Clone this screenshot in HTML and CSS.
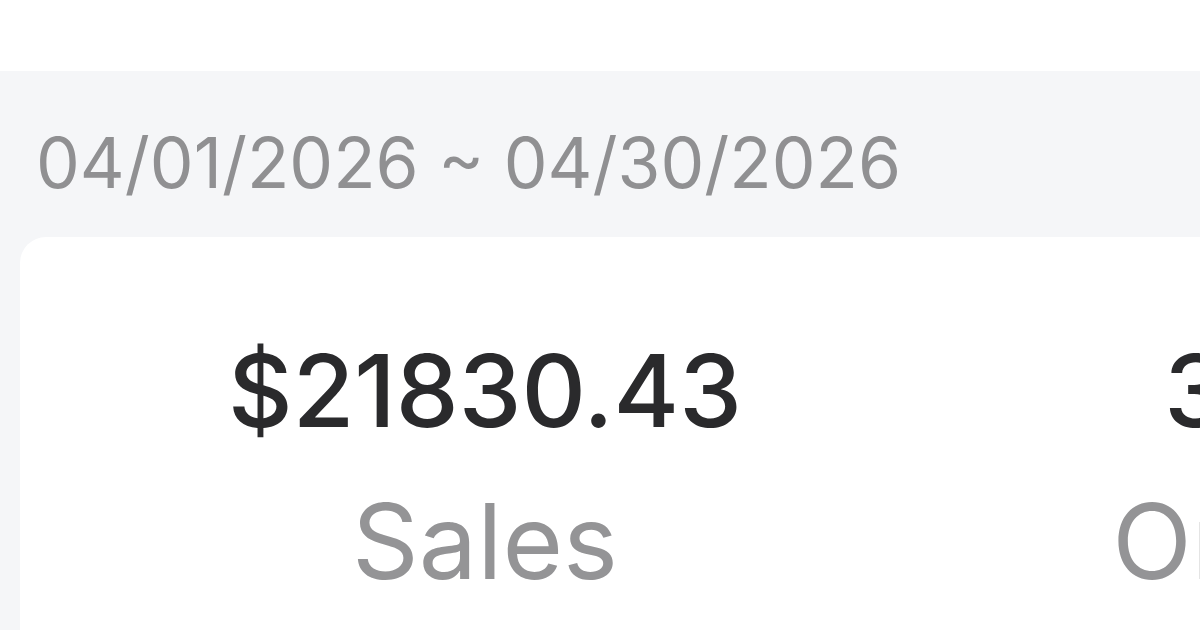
FILE: index.html
```html
<!DOCTYPE html>
<html lang="en">
<head>
    <meta charset="UTF-8">
    <title>Sales Summary</title>
    <link rel="stylesheet" href="styles.css">
</head>
<body>
    <div class="top-bar"></div>

    <main class="content">
        <div class="date-range">04/01/2026 ~ 04/30/2026</div>

        <section class="summary-card">
            <div class="stat">
                <div class="stat-value">$21830.43</div>
                <div class="stat-label">Sales</div>
            </div>
            <div class="stat">
                <div class="stat-value">3214</div>
                <div class="stat-label">Orders</div>
            </div>
        </section>
    </main>
</body>
</html>
```

FILE: styles.css
```css
/* Summary page */
html, body { margin: 0; padding: 0; }
body {
    font-family: Inter, "Noto Sans", sans-serif;
    background: #f5f6f8;
    width: 1200px;
    height: 630px;
    overflow: hidden;
}
.top-bar { height: 71px; background: #ffffff; }
.content { padding: 0 0 0 20px; }
.date-range {
    font-size: 69.5px;
    color: #909092;
    line-height: 1;
    padding: 58px 0 0 16px;
    height: 108px;
}
.summary-card {
    background: #ffffff;
    border-radius: 26px 0 0 0;
    display: grid;
    grid-template-columns: 930px 660px;
    height: 400px;
    overflow: hidden;
}
.stat { text-align: center; padding-top: 104px; }
.stat-value {
    font-size: 100px;
    font-weight: 500;
    color: #2a2a2c;
    line-height: 1;
}
.stat-label {
    font-size: 104px;
    color: #949496;
    line-height: 1;
    margin-top: 48px;
}
```
